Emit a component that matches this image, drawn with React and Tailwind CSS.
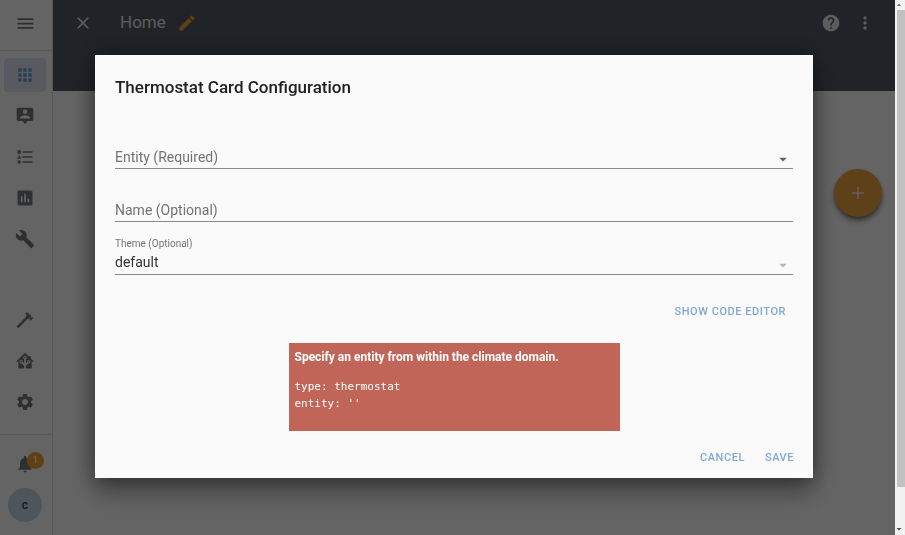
import { useState } from 'react';
import { MdApps, MdArrowDropDown, MdArrowDropUp, MdBuild, MdClose, MdEdit, MdHelp, MdInsertChart, MdMenu, MdMoreVert, MdNotifications, MdSettings } from 'react-icons/md';

const svgIcon = (d) => ({ className }) => (
  <svg className={className} viewBox="0 0 24 24" fill="currentColor" fillRule="evenodd" aria-hidden="true"><path d={d} /></svg>
);

const TooltipAccount = svgIcon('M4,2H20A2,2 0 0,1 22,4V16A2,2 0 0,1 20,18H15L12,22L9,18H4A2,2 0 0,1 2,16V4A2,2 0 0,1 4,2M12,4.3A2.6,2.6 0 0,0 9.4,6.9A2.6,2.6 0 0,0 12,9.5A2.6,2.6 0 0,0 14.6,6.9A2.6,2.6 0 0,0 12,4.3M18,15V14.1C18,12.1 14,11 12,11C10,11 6,12.1 6,14.1V15H18Z');
const ListType = svgIcon('M5,9.5L7.5,14H2.5L5,9.5M3,4H7V8H3V4M5,20A2,2 0 0,0 7,18A2,2 0 0,0 5,16A2,2 0 0,0 3,18A2,2 0 0,0 5,20M9,5V7H21V5H9M9,19H21V17H9V19M9,13H21V11H9V13Z');
const Hammer = svgIcon('M2,19.63L13.43,8.2L12.72,7.5L14.14,6.07L12,3.89C13.2,2.7 15.09,2.7 16.27,3.89L19.87,7.5L18.45,8.91H21.29L22,9.62L18.45,13.21L17.74,12.5V9.62L16.27,11.04L15.56,10.33L4.13,21.76L2,19.63Z');
const HomeAssistant = svgIcon('M21.8,13H20V21H13V17.67L15.79,14.88L16.5,15C17.66,15 18.6,14.06 18.6,12.9C18.6,11.74 17.66,10.8 16.5,10.8A2.1,2.1 0 0,0 14.4,12.9L14.5,13.61L13,15.13V9.65C13.66,9.29 14.1,8.6 14.1,7.8A2.1,2.1 0 0,0 12,5.7A2.1,2.1 0 0,0 9.9,7.8C9.9,8.6 10.34,9.29 11,9.65V15.13L9.5,13.61L9.6,12.9A2.1,2.1 0 0,0 7.5,10.8A2.1,2.1 0 0,0 5.4,12.9A2.1,2.1 0 0,0 7.5,15L8.21,14.88L11,17.67V21H4V13H2.25C1.83,13 1.42,13 1.42,12.79C1.43,12.57 1.85,12.15 2.28,11.72L11,3C11.33,2.67 11.67,2.33 12,2.33C12.33,2.33 12.67,2.67 13,3L17,7V6H19V9L21.78,11.78C22.18,12.18 22.59,12.59 22.6,12.8C22.6,13 22.2,13 21.8,13M7.5,12A0.9,0.9 0 0,1 8.4,12.9A0.9,0.9 0 0,1 7.5,13.8A0.9,0.9 0 0,1 6.6,12.9A0.9,0.9 0 0,1 7.5,12M16.5,12C17,12 17.4,12.4 17.4,12.9C17.4,13.4 17,13.8 16.5,13.8A0.9,0.9 0 0,1 15.6,12.9A0.9,0.9 0 0,1 16.5,12M12,6.9C12.5,6.9 12.9,7.3 12.9,7.8C12.9,8.3 12.5,8.7 12,8.7C11.5,8.7 11.1,8.3 11.1,7.8C11.1,7.3 11.5,6.9 12,6.9Z');
const Plus = svgIcon('M18,12.6H12.6V18H11.4V12.6H6V11.4H11.4V6H12.6V11.4H18V12.6Z');
const Caret = svgIcon('M7.5,10.5L12,15L16.5,10.5H7.5Z');

const mainLinks = [
  { name: 'Overview', Icon: MdApps, active: true },
  { name: 'Map', Icon: TooltipAccount },
  { name: 'Logbook', Icon: ListType },
  { name: 'History', Icon: MdInsertChart },
  { name: 'Tools', Icon: MdBuild },
];

const systemLinks = [
  { name: 'Developer', Icon: Hammer },
  { name: 'Supervisor', Icon: HomeAssistant },
  { name: 'Configuration', Icon: MdSettings },
];

function NavLink({ item }) {
  const { name, Icon, active } = item;
  return (
    <a
      href="#"
      aria-label={name}
      className={`flex h-[34px] items-center justify-center rounded-sm ${active ? 'bg-[#dae2eb] text-[#6a9ad2]' : 'text-[#747779]'}`}
    >
      <Icon className="size-5" />
    </a>
  );
}

function Sidebar() {
  return (
    <aside className="flex w-[53px] shrink-0 flex-col border-r border-[#dddddd] bg-[#fafafa]">
      <div className="flex h-[51px] items-center justify-center border-b border-[#dddddd] pr-[2px] pb-1">
        <button type="button" aria-label="Menu" className="text-[#747779]"><MdMenu className="size-[21px]" /></button>
      </div>
      <nav className="flex flex-1 flex-col gap-[7px] pt-[7px] pr-[6px] pb-[15px] pl-1">
        {mainLinks.map((item) => <NavLink key={item.name} item={item} />)}
        <div className="flex-1" />
        {systemLinks.map((item) => <NavLink key={item.name} item={item} />)}
      </nav>
      <div className="flex flex-col items-center gap-[7px] border-t border-[#dddddd] pt-3 pr-[2px] pb-[13px]">
        <button type="button" aria-label="Notifications" className="relative flex size-[34px] items-center justify-center text-[#747779]">
          <MdNotifications className="size-5" />
          <span className="absolute top-[5px] -right-[2px] flex size-[17px] items-center justify-center rounded-full bg-[#f0a030] text-[9px] text-white">1</span>
        </button>
        <a href="#" className="flex size-[34px] items-center justify-center rounded-full bg-[#c0d6e8] text-[12px] font-medium text-[#424242]">c</a>
      </div>
    </aside>
  );
}

function Field({ id, label, floated, children }) {
  return (
    <div className="relative pt-4">
      {children}
      <label
        htmlFor={id}
        className={`pointer-events-none absolute left-0 text-[#737373] ${floated ? 'top-0 text-[10px] leading-4' : 'top-4 text-[14px] leading-[22px]'}`}
      >
        {label}
      </label>
    </div>
  );
}

const control = 'block h-[23px] w-full appearance-none rounded-none border-b border-[#8a8a8a] bg-transparent pb-[2px] text-[14px] leading-5 text-[#333333] outline-none';

function CardDialog() {
  const [entity, setEntity] = useState('');
  const [name, setName] = useState('');
  const [theme, setTheme] = useState('default');

  return (
    <div role="dialog" aria-labelledby="dialog-title" className="w-full bg-[#fafafa] px-5 pt-5 pb-1 shadow-[0_14px_24px_rgba(0,0,0,0.35),0_0_20px_rgba(0,0,0,0.4)]">
      <h2 id="dialog-title" className="text-[17px] leading-6 font-medium text-[#212121]">Thermostat Card Configuration</h2>

      <form className="mt-[31px] flex flex-col gap-[14px]">
        <Field id="entity" label="Entity (Required)" floated={entity !== ''}>
          <select id="entity" value={entity} onChange={(e) => setEntity(e.target.value)} className={control}>
            <option value="" />
          </select>
          <Caret className="pointer-events-none absolute right-0 bottom-0 size-5 text-[#616161]" />
        </Field>
        <Field id="name" label="Name (Optional)" floated={name !== ''}>
          <input id="name" type="text" value={name} onChange={(e) => setName(e.target.value)} className={control} />
        </Field>
        <Field id="theme" label="Theme (Optional)" floated>
          <select id="theme" value={theme} onChange={(e) => setTheme(e.target.value)} className={control}>
            <option>default</option>
          </select>
          <Caret className="pointer-events-none absolute right-0 bottom-0 size-5 text-[#b5b5b5]" />
        </Field>
      </form>

      <div className="mt-[21px] flex justify-end">
        <button type="button" className="h-8 px-[7px] text-[11px] font-medium tracking-wider text-[#7fa9d4] uppercase">Show code editor</button>
      </div>

      {/* Preview error */}
      <div className="mx-auto mt-[15px] max-w-[331px] bg-[#c16558] px-[6px] pt-[6px] pb-[19px] text-white">
        <p className="text-[12px] leading-[17px] font-bold">Specify an entity from within the climate domain.</p>
        <pre className="mt-3 font-['DejaVu_Sans_Mono',monospace] text-[11px] leading-[17px]">{"type: thermostat\nentity: ''"}</pre>
      </div>

      <div className="mt-[11px] -mr-2 flex justify-end gap-[6px]">
        <button type="button" className="h-8 px-[7px] text-[11px] font-medium tracking-wider text-[#7fa9d4] uppercase">Cancel</button>
        <button type="button" className="h-8 px-[7px] text-[11px] font-medium tracking-wider text-[#7fa9d4] uppercase">Save</button>
      </div>
    </div>
  );
}

export default function App() {
  return (
    <div className="flex h-screen min-h-[480px] font-[Roboto,sans-serif]">
      <Sidebar />
      <main className="flex flex-1 flex-col bg-[#fafafa]">
        <header className="h-[91px] bg-[#505a66] text-[#e4e6e8]">
          <div className="flex h-[46px] items-center px-5">
            <button type="button" aria-label="Close"><MdClose className="size-5" /></button>
            <h1 className="ml-[27px] text-[17px]">Home</h1>
            <button type="button" aria-label="Edit" className="ml-[11px] text-[#f0a030]"><MdEdit className="size-5" /></button>
            <div className="ml-auto flex gap-[14px]">
              <button type="button" aria-label="Help"><MdHelp className="size-5" /></button>
              <button type="button" aria-label="More"><MdMoreVert className="size-5" /></button>
            </div>
          </div>
        </header>
        <div className="flex justify-end pt-[78px] pr-[13px]">
          <button type="button" aria-label="Add card" className="flex size-12 items-center justify-center rounded-full bg-[#eba43c] text-white shadow-md shadow-black/50">
            <Plus className="size-6" />
          </button>
        </div>
      </main>

      {/* Scrollbar */}
      <div className="z-20 flex w-[10px] shrink-0 flex-col items-end overflow-hidden bg-[#f1f1f1] text-[#505050]">
        <MdArrowDropUp className="h-[10px] w-3 shrink-0" />
        <div className="w-2 grow bg-[#c1c1c1]" />
        <MdArrowDropDown className="mt-9 h-3 w-3 shrink-0" />
      </div>

      <div className="fixed inset-0 z-10 flex items-center justify-center bg-black/60 pr-[92px] pb-[2px] pl-[95px]">
        <CardDialog />
      </div>
    </div>
  );
}
